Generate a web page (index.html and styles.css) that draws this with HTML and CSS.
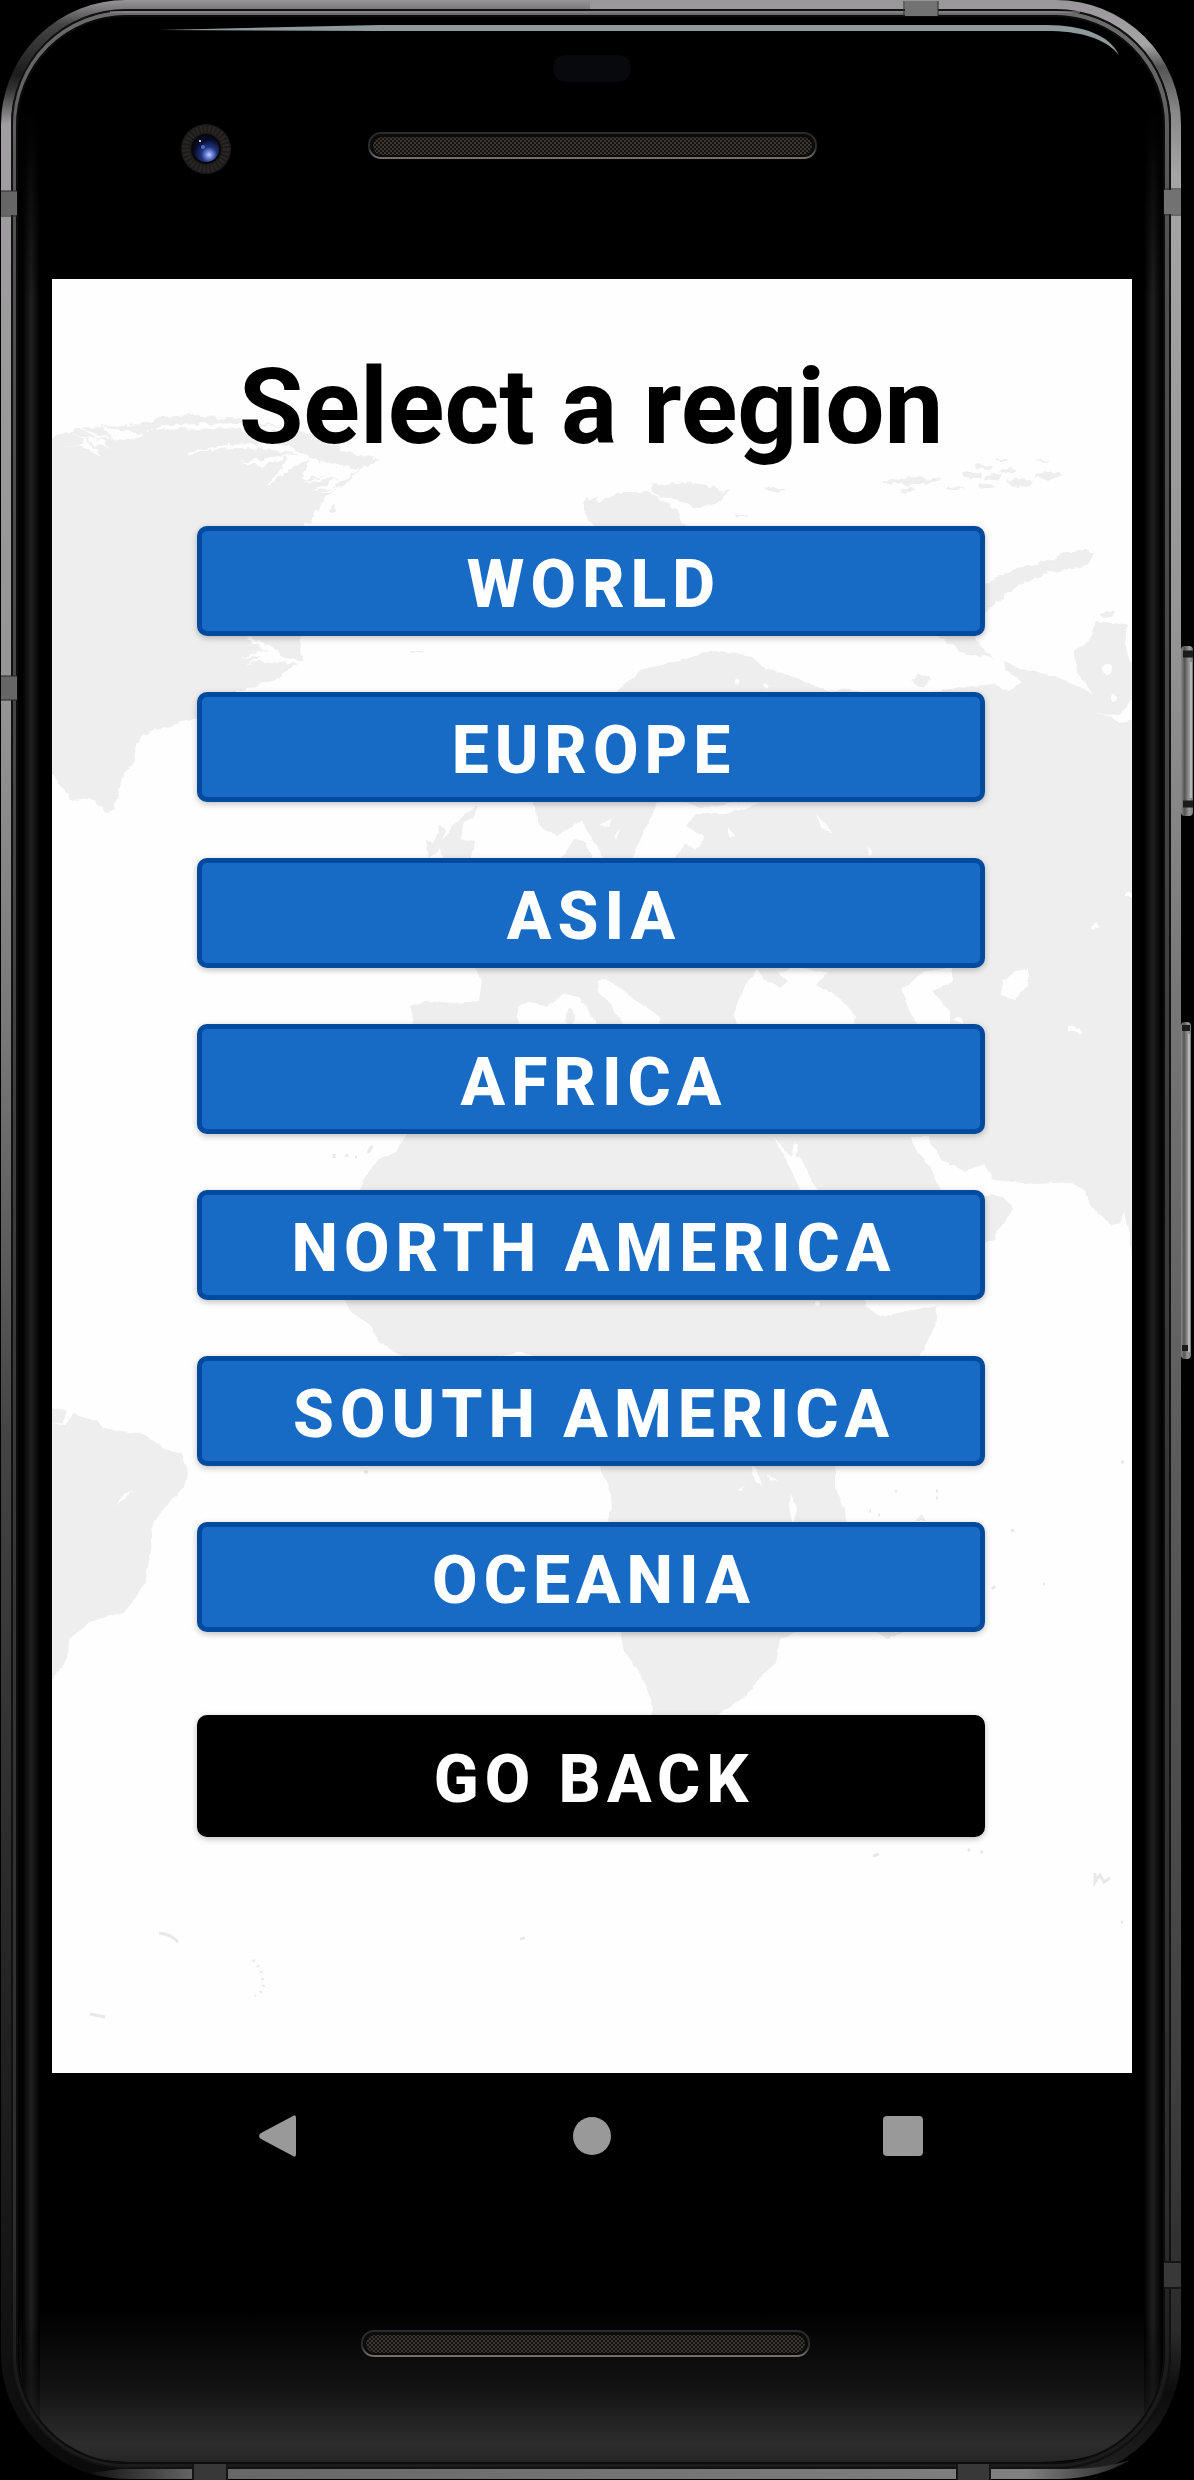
FILE: index.html
```html
<!DOCTYPE html>
<html lang="en">
<head>
<meta charset="utf-8">
<meta name="viewport" content="width=device-width, initial-scale=1">
<title>Select a region</title>
<link rel="stylesheet" href="styles.css">
</head>
<body>
<div class="phone">
  <!-- Phone body: metal rim, antenna bands, side keys and glass reflections -->
  <svg class="phone-art" viewBox="0 0 1194 2480" preserveAspectRatio="none" aria-hidden="true">
    <defs>
      <linearGradient id="rimLeft" gradientUnits="userSpaceOnUse" x1="0" y1="0" x2="0" y2="2480">
        <stop offset="0" stop-color="#999699"/><stop offset=".01" stop-color="#444"/>
        <stop offset=".03" stop-color="#1c1c1c"/><stop offset=".036" stop-color="#333"/>
        <stop offset=".05" stop-color="#a09ea0"/><stop offset=".28" stop-color="#959595"/>
        <stop offset=".42" stop-color="#777"/><stop offset=".58" stop-color="#444"/>
        <stop offset=".83" stop-color="#202020"/><stop offset="1" stop-color="#0a0a0a"/>
      </linearGradient>
      <linearGradient id="rimRight" gradientUnits="userSpaceOnUse" x1="0" y1="0" x2="0" y2="2480">
        <stop offset="0" stop-color="#999699"/><stop offset=".018" stop-color="#a5a5a5"/>
        <stop offset=".027" stop-color="#555"/><stop offset=".045" stop-color="#888"/>
        <stop offset=".07" stop-color="#a5a5a5"/><stop offset=".25" stop-color="#959595"/>
        <stop offset=".4" stop-color="#777"/><stop offset=".58" stop-color="#5c5c5c"/>
        <stop offset=".83" stop-color="#404040"/><stop offset=".94" stop-color="#2a2a2a"/>
        <stop offset=".965" stop-color="#0c0c0c"/><stop offset="1" stop-color="#222"/>
      </linearGradient>
      <linearGradient id="bevel" gradientUnits="userSpaceOnUse" x1="0" y1="0" x2="0" y2="2480">
        <stop offset="0" stop-color="#6d6d6d"/><stop offset=".1" stop-color="#505050"/>
        <stop offset=".5" stop-color="#3a3a3a"/><stop offset=".9" stop-color="#2c2c2c"/>
        <stop offset=".96" stop-color="#1a1a1a"/><stop offset="1" stop-color="#1c1c1c"/>
      </linearGradient>
      <linearGradient id="chin" x1="0" y1="0" x2="0" y2="1">
        <stop offset="0" stop-color="#000"/><stop offset=".5" stop-color="#121212"/>
        <stop offset=".88" stop-color="#2d2d2d"/><stop offset="1" stop-color="#252525"/>
      </linearGradient>
      <linearGradient id="glow"><stop offset="0" stop-color="#000"/><stop offset=".5" stop-color="#1e1e1e"/><stop offset="1" stop-color="#000"/></linearGradient>
      <linearGradient id="fade" x1="0" y1="0" x2="0" y2="1">
        <stop offset="0" stop-color="#000"/><stop offset=".08" stop-color="#fff"/>
        <stop offset=".95" stop-color="#fff"/><stop offset="1" stop-color="#000"/>
      </linearGradient>
      <linearGradient id="rimBottom"><stop offset="0" stop-color="#111"/><stop offset=".1" stop-color="#666"/><stop offset=".9" stop-color="#808080"/><stop offset="1" stop-color="#222"/></linearGradient>
      <linearGradient id="key"><stop offset="0" stop-color="#888"/><stop offset=".3" stop-color="#555"/><stop offset=".7" stop-color="#999"/><stop offset="1" stop-color="#777"/></linearGradient>
      <clipPath id="leftHalf"><rect width="590" height="2480"/></clipPath>
      <clipPath id="rightHalf"><rect x="590" width="604" height="2480"/></clipPath>
      <mask id="fadeEnds"><rect y="110" width="1194" height="2330" fill="url(#fade)"/></mask>
    </defs>
    <rect x="1" y="1" width="1180" height="2478" rx="125" fill="#000"/>
    <path d="M19 2310H1162V2350Q1162 2462 1040 2462H130Q19 2462 19 2350Z" fill="url(#chin)"/>
    <g mask="url(#fadeEnds)">
      <rect x="22" y="110" width="18" height="2330" fill="url(#glow)"/>
      <rect x="1144" y="110" width="18" height="2330" fill="url(#glow)"/>
    </g>
    <g fill="none">
      <rect x="6" y="5" width="1170" height="2469" rx="120" stroke="url(#rimLeft)" stroke-width="10" clip-path="url(#leftHalf)"/>
      <rect x="6" y="5" width="1170" height="2469" rx="120" stroke="url(#rimRight)" stroke-width="10" clip-path="url(#rightHalf)"/>
      <rect x="14" y="13" width="1153" height="2453" rx="112" stroke="url(#bevel)" stroke-width="5"/>
      <rect x="12" y="10" width="1158" height="2458" rx="114" stroke="#111" stroke-width="2"/>
      <rect x="17" y="16" width="1147" height="2447" rx="109" stroke="#0c0c0c" stroke-width="2"/>
    </g>
    <path d="M110 12H1080" stroke="#999" stroke-width="1"/>
    <path d="M90 2473Q110 2479 130 2479H1060Q1100 2478 1130 2460Q1100 2470 1060 2469H120Z" fill="url(#rimBottom)"/>
    <path d="M160 30L380 25H1046C1085 25 1110 36 1119 55C1105 38 1080 31 1046 31H380Z" fill="#8f9a9b"/>
    <!-- Antenna bands -->
    <g stroke="#2a2a2a" stroke-width="0">
      <path d="M1 191H17V215H1ZM1 676H17V700H1Z" fill="#666"/>
      <path d="M1164 190H1181V214H1164ZM905 1H938V16H905Z" fill="#727272"/>
      <path d="M1164 2262H1181V2287H1164ZM194 2464H226V2480H194ZM957 2464H990V2480H957Z" fill="#383838"/>
      <path stroke-width="1" d="M1 191H17M1 216H17M1 676H17M1 700H17M1164 189H1181M1164 215H1181M904 1V16M938 1V16"/>
      <path stroke="#151515" stroke-width="2" d="M1164 2262H1181M1164 2288H1181M193 2464V2480M227 2464V2480M957 2464V2480M990 2464V2480"/>
    </g>
    <!-- Power and volume keys -->
    <rect x="1181" y="646" width="12" height="170" rx="4" fill="url(#key)"/>
    <path d="M1183 654H1193M1183 804H1193" stroke="#1b1b1b" stroke-width="7"/>
    <rect x="1181" y="1022" width="10" height="337" rx="4" fill="url(#key)"/>
    <path d="M1182 1028H1190M1182 1348H1190" stroke="#1b1b1b" stroke-width="6"/>
    <path d="M1189 1034V1352M1191 662V798" stroke="#b5b5b5" stroke-width="2"/>
  </svg>

  <header class="forehead" aria-hidden="true">
    <div class="sensor"></div>
    <div class="camera-row">
      <svg class="camera" viewBox="0 0 52 52">
        <defs>
          <radialGradient id="lens" cx=".62" cy=".72" r=".6">
            <stop offset="0" stop-color="#c3d0ff"/><stop offset=".22" stop-color="#6f85d8"/>
            <stop offset=".5" stop-color="#1f347c"/><stop offset="1" stop-color="#060a22"/>
          </radialGradient>
        </defs>
        <circle cx="26" cy="26" r="25" fill="#1d1a1a"/>
        <circle cx="26" cy="26" r="20" fill="none" stroke="#2b2727" stroke-width="7" stroke-dasharray="2 2"/>
        <circle cx="26" cy="26" r="15" fill="#07070c"/>
        <circle cx="26" cy="26" r="13" fill="url(#lens)"/>
        <circle cx="23" cy="24" r="2" fill="#4a6bd8"/>
        <circle cx="20" cy="18" r="1" fill="#fff"/>
      </svg>
      <svg class="speaker" viewBox="0 0 449 27">
        <defs>
          <pattern id="mesh" width="4" height="4" patternUnits="userSpaceOnUse">
            <rect width="4" height="4" fill="#14120f"/>
            <path d="M0 1H2M2 3H4" stroke="#645c54" stroke-width="1"/>
          </pattern>
          <linearGradient id="lip" x1="0" y1="0" x2="0" y2="1"><stop offset="0" stop-color="#2b2b2d"/><stop offset=".6" stop-color="#2b2b2b"/><stop offset="1" stop-color="#77706a"/></linearGradient>
        </defs>
        <rect x="1" y="1" width="447" height="25" rx="12" fill="#0b0b0b" stroke="url(#lip)" stroke-width="2"/>
        <rect x="5" y="5" width="439" height="18" rx="9" fill="url(#mesh)"/>
      </svg>
    </div>
  </header>

  <main class="screen">
    <svg class="map" viewBox="52 279 1080 1794" preserveAspectRatio="xMidYMin slice" aria-hidden="true">
      <defs>
        <filter id="coast" x="-5%" y="-5%" width="110%" height="110%">
          <feTurbulence type="fractalNoise" baseFrequency=".12" numOctaves="2" seed="4"/>
          <feDisplacementMap in="SourceGraphic" scale="9" xChannelSelector="R" yChannelSelector="G"/>
        </filter>
        <filter id="shore" x="-5%" y="-5%" width="110%" height="110%">
          <feTurbulence type="fractalNoise" baseFrequency=".1" numOctaves="2" seed="9"/>
          <feDisplacementMap in="SourceGraphic" scale="4" xChannelSelector="R" yChannelSelector="G"/>
        </filter>
      </defs>
      <!-- Europe, Asia and Africa -->
      <g filter="url(#shore)">
        <path class="land" d="M617 691L642 669L676 662L714 650L752 657L763 667L797 678L827 691L850 689L880 697L941 691L960 687L994 684L1009 691L1022 682L1004 668L1003 660L1020 669L1055 676L1092 693L1077 673L1075 651L1089 641L1096 621L1127 625L1125 644L1130 662L1145 662V1260H1132L1130 1235L1125 1212L1120 1223L1111 1225L1092 1207L1084 1190L1072 1182L1036 1184L994 1180L985 1166L975 1180L983 1188L990 1194L1005 1198L1013 1209L1005 1222L996 1232L994 1240L985 1242L937 1300L937 1307L935 1326L920 1356L835 1450L835 1466L835 1487L845 1509L846 1522L797 1632L780 1639L776 1663L762 1675L747 1695L720 1714L690 1722H653L651 1699L638 1670L625 1652L621 1632L607 1522L612 1509L611 1495L605 1480L600 1466L560 1400L533 1356L522 1352L501 1356L450 1370L401 1356L378 1341L372 1326L351 1312L344 1300L350 1240L360 1190L366 1175L379 1159L396 1151L407 1134L414 1070V1024L411 1007L425 1001L454 1003L479 1001L482 980L475 969L560 870L562 857L575 839L586 842L591 857L597 865L604 857L593 841L582 821L557 836L539 826L534 802L545 750Z"/>
        <path class="land" d="M464 815L478 806L474 817L464 822L460 838L475 842L471 862H443L439 845L450 830ZM433 843L440 826L446 829L438 852L428 858L425 840Z"/>
        <g class="sea">
          <path d="M657 803L643 834L632 857L640 870H668L675 857L686 844L696 850L705 837L686 826L696 814L725 814L761 804L730 803L700 808L680 800Z"/>
          <path d="M598 980L611 981L632 998L661 1017L657 1027H625L611 1005L598 992ZM518 1027V1007L528 1003L546 1006L566 994L580 998L599 1027Z"/>
          <path d="M757 969L744 987L733 1014L738 1027H854L856 1016L842 1000L816 984L829 973L797 967L778 972L789 982L780 988L765 980Z"/>
          <path d="M952 967L922 973L901 989L909 1010L918 1027L950 1024V1012L933 991L952 982Z"/>
          <path d="M1002 980L1017 971L1028 968V985L1015 1000L1002 996ZM911 1137L928 1137L941 1159L964 1171L985 1164L990 1195H943L930 1166L916 1151Z"/>
          <path d="M774 1137L791 1157L801 1157L817 1192H801L789 1166ZM865 1305L880 1317L903 1312L937 1305V1290H865Z"/>
          <path d="M1091 714L1110 716L1119 723L1145 716V680L1128 704L1119 715Z"/>
          <path d="M751 1466L757 1470L762 1485L755 1480ZM768 1474L778 1482L770 1480ZM738 1490L745 1485L742 1491ZM791 1494L797 1508L793 1525L789 1508ZM816 814L832 832L822 830ZM727 826L735 837L729 838ZM600 825L612 818L610 827ZM614 836L620 829L616 840ZM868 845L872 852L869 858ZM952 1020Q960 1012 964 1024Z"/>
          <path d="M1068 1029Q1078 1028 1082 1034M1092 929L1098 925M1126 894H1134M796 1144L793 1158M736 683L738 679M764 684L768 687" fill="none" class="inlet"/>
          <circle cx="1107" cy="669" r="5"/><circle cx="1114" cy="698" r="3"/><circle cx="817" cy="1304" r="3"/>
        </g>
        <ellipse class="land" cx="570" cy="1017" rx="4" ry="9"/>
        <!-- South America -->
        <path class="land" d="M40 1405L52 1407L67 1411L63 1422L52 1424L66 1424L73 1414L99 1422L103 1429L110 1429L142 1434L165 1449L182 1454L188 1472L184 1487L168 1503L153 1523L151 1552L145 1581L134 1601L124 1612L92 1621L69 1639L68 1657L52 1681H40Z"/>
        <path class="sea" d="M99 1436L103 1428L110 1429L103 1429ZM115 1506L124 1494L134 1490L126 1497Z"/>
        <!-- Madagascar and Indian Ocean islands -->
        <path class="land" d="M875 1632L889 1639L904 1632ZM916 1521L921 1513L926 1521Z"/>
      </g>
      <!-- Greenland and Arctic islands -->
      <g filter="url(#coast)">
        <path class="land" d="M40 440L52 439L76 428L104 426L144 424L161 417L194 415L240 419L300 430L340 450L354 453L379 459L358 471L344 484L326 496L319 509L306 525L290 580L300 636L302 660L272 680L251 687L220 700L190 721L161 728L144 735L135 746L136 759L124 773L120 791L113 809L106 812L90 798L72 800L52 775H40Z"/>
        <g class="sea">
          <path d="M52 450L76 443L100 456L96 447L70 432L98 445L112 448L82 429L120 441L100 427L142 433L166 425L240 423L300 430L150 429L130 440L96 438ZM188 456Q220 444 270 450L300 452L268 458L240 462L262 466L290 456L275 476L266 487L290 470L310 458L300 480L330 474L300 484L340 478L312 490L345 486L320 495L360 468L320 462L290 446Q230 440 188 453Z"/>
          <path d="M244 636L272 646L280 656L302 662L276 664L262 660L244 667L262 656L238 660L258 652L242 650L268 652Z"/>
        </g>
        <path class="land" d="M585 498L600 501L623 492L649 492L676 509L685 527H597L585 516ZM649 485L689 482L729 492L714 505L698 508L681 501L657 495ZM985 584L1002 575L1024 566L1047 562L1066 553L1085 550L1094 555L1085 566L1055 571L1020 584L1002 598L985 612L975 634L979 643L994 659L960 651L941 637Z"/>
        <g class="land">
          <ellipse cx="775" cy="489" rx="9" ry="3"/><ellipse cx="921" cy="681" rx="9" ry="6"/><ellipse cx="1108" cy="614" rx="8" ry="4"/>
          <ellipse cx="1020" cy="482" rx="12" ry="5"/><ellipse cx="1049" cy="475" rx="13" ry="4"/><ellipse cx="892" cy="482" rx="10" ry="2"/>
          <ellipse cx="915" cy="481" rx="14" ry="4"/><ellipse cx="908" cy="490" rx="7" ry="3"/><ellipse cx="933" cy="480" rx="8" ry="2"/>
          <ellipse cx="955" cy="487" rx="8" ry="2"/><ellipse cx="972" cy="475" rx="9" ry="3"/><ellipse cx="984" cy="467" rx="9" ry="2"/>
          <ellipse cx="994" cy="477" rx="10" ry="3"/><ellipse cx="1001" cy="460" rx="7" ry="1"/><ellipse cx="1008" cy="470" rx="9" ry="2"/>
          <ellipse cx="986" cy="486" rx="8" ry="2"/><ellipse cx="1042" cy="461" rx="7" ry="1"/><ellipse cx="416" cy="652" rx="5" ry="1"/>
          <ellipse cx="333" cy="510" rx="4" ry="3"/><ellipse cx="740" cy="515" rx="8" ry="1"/>
        </g>
      </g>
      <!-- Scattered southern islands -->
      <g class="isles">
        <path d="M159 1933Q171 1934 178 1942M90 2014L105 2017M520 1939L525 1938M873 1856L879 1854M334 1154V1158M346 1155L348 1156M355 1157H357M368 1153L372 1146M364 1472H368M992 1589L995 1586M1121 1922H1123M1043 1584H1045M1011 1531L1014 1530M968 1851L970 1849M980 1852H983M1121 1462H1124M895 1491H897M936 1491H938M936 1498H938M869 1511H871M878 1515H880"/>
        <path d="M1095 1873V1882L1100 1875L1104 1882L1110 1878"/>
        <path d="M253 1960L257 1965L261 1970L262 1978L264 1984L262 1991L255 1996" stroke-dasharray="2 5"/>
      </g>
    </svg>
    <h1 class="title">Select a region</h1>
    <div class="regions">
      <button class="btn" type="button">WORLD</button>
      <button class="btn" type="button">EUROPE</button>
      <button class="btn" type="button">ASIA</button>
      <button class="btn" type="button">AFRICA</button>
      <button class="btn" type="button">NORTH AMERICA</button>
      <button class="btn" type="button">SOUTH AMERICA</button>
      <button class="btn" type="button">OCEANIA</button>
    </div>
    <button class="btn btn-back" type="button">GO BACK</button>
  </main>

  <nav class="navbar" aria-label="System navigation">
    <button class="nav-btn" type="button" aria-label="Back"><svg viewBox="0 0 48 48"><path d="M36 4Q39 2 39 6V42Q39 46 36 44L4 27Q0 24 4 21Z"/></svg></button>
    <button class="nav-btn" type="button" aria-label="Home"><svg viewBox="0 0 48 48"><circle cx="24" cy="24" r="19"/></svg></button>
    <button class="nav-btn" type="button" aria-label="Overview"><svg viewBox="0 0 48 48"><rect x="4" y="4" width="40" height="40" rx="4"/></svg></button>
  </nav>

  <footer class="chin" aria-hidden="true">
    <svg class="speaker" viewBox="0 0 449 27">
      <rect x="1" y="1" width="447" height="25" rx="12" fill="#0b0b0b" stroke="url(#lip)" stroke-width="2"/>
      <rect x="5" y="5" width="439" height="18" rx="9" fill="url(#mesh)"/>
    </svg>
  </footer>
</div>
</body>
</html>
```
FILE: styles.css
```css
* {
  box-sizing: border-box;
}

body {
  margin: 0;
  background: #000;
  font-family: Roboto, "Liberation Sans", sans-serif;
}

.phone {
  position: relative;
  padding: 0 62px 0 52px;
}

.phone-art {
  position: absolute;
  inset: 0;
  width: 100%;
  height: 100%;
}

.forehead,
.screen,
.navbar,
.chin {
  position: relative;
}

.forehead {
  padding: 55px 0 104px;
}

.sensor {
  width: 78px;
  height: 27px;
  margin: 0 auto 41px;
  border-radius: 13px;
  background: #08090c;
}

.camera-row {
  display: grid;
  grid-template-columns: 1fr auto 1fr;
  align-items: center;
}

.camera {
  width: 52px;
  height: 52px;
  margin-left: 128px;
}

.speaker {
  display: block;
  width: 449px;
  height: 27px;
}

.camera-row .speaker {
  margin-bottom: 8px;
}

.screen {
  display: flex;
  flex-direction: column;
  align-items: stretch;
  padding: 67px 147px 236px 145px;
  background: #fefefe;
  overflow: hidden;
}

.map {
  position: absolute;
  inset: 0;
  width: 100%;
  height: 100%;
}

.land {
  fill: #eee;
}

.sea {
  fill: #fefefe;
}

.inlet {
  stroke: #fefefe;
  stroke-width: 4px;
}

.isles {
  fill: none;
  stroke: #e8e8e8;
  stroke-width: 3px;
}

.title {
  position: relative;
  margin: 0 0 57px;
  font-size: 105px;
  font-weight: 700;
  line-height: 123px;
  text-align: center;
  white-space: nowrap;
  color: #000;
}

.regions {
  display: flex;
  flex-direction: column;
  gap: 56px;
}

.btn {
  position: relative;
  width: 100%;
  height: 110px;
  padding: 8px 0 0 6px;
  border: 5px solid #004ba0;
  border-radius: 10px;
  background: #176bc4;
  box-shadow: 0 2px 6px rgba(0, 0, 0, .25);
  color: #fff;
  font-family: inherit;
  font-size: 66px;
  font-weight: 800;
  line-height: 78px;
  letter-spacing: 6px;
  text-align: center;
}

.btn-back {
  height: 122px;
  margin-top: 83px;
  border-color: #000;
  background: #000;
}

.navbar {
  display: grid;
  grid-template-columns: repeat(3, 1fr);
  align-items: center;
  height: 126px;
  padding: 0 73px;
}

.nav-btn {
  display: flex;
  justify-content: center;
  padding: 0;
  border: 0;
  background: none;
}

.nav-btn svg {
  width: 48px;
  height: 48px;
  fill: #999;
}

.chin {
  display: flex;
  justify-content: center;
  padding: 131px 14px 123px 0;
}
```
